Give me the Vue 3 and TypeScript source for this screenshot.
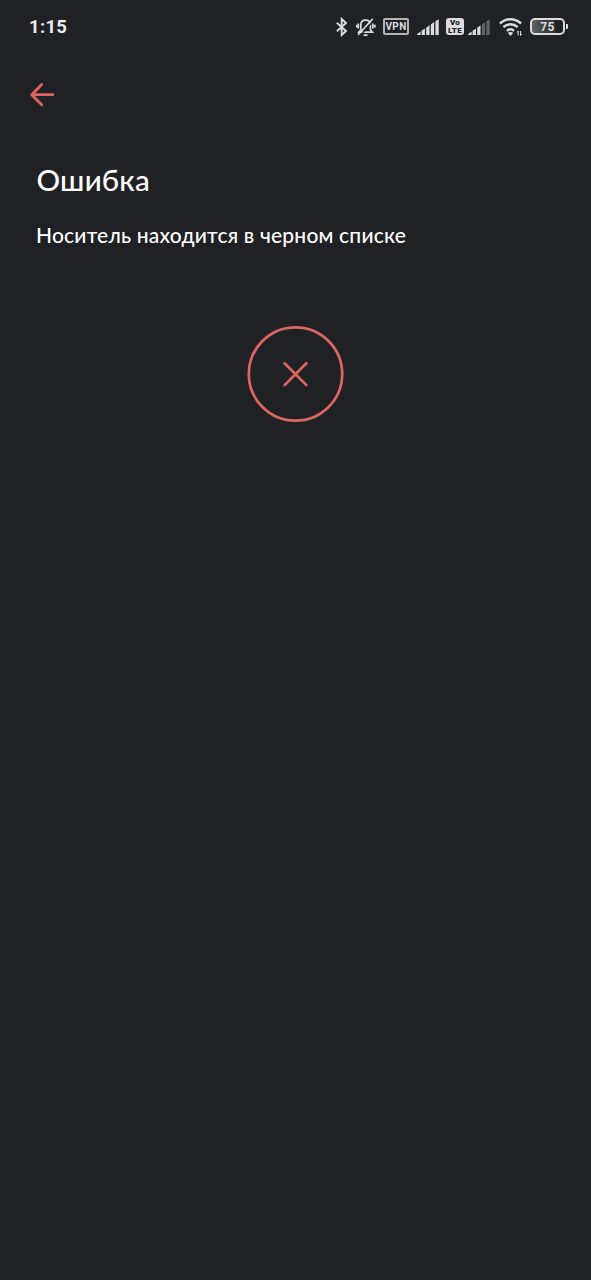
<script setup lang="ts">
const bars: string[] = [
  'M0 15.200 3.600 12.500V16H.8Q0 16 0 15.200z',
  'M4.600 11.800 7.900 9.400V16H4.600z',
  'M9.200 8.700 12.500 6.300V16H9.200z',
  'M13.800 5.500 17.100 3.100V16h-3.300z',
  'M18.400 2.300 21.700.2V16h-3.300z',
]

const time = '1:15'
const title = 'Ошибка'
const message = 'Носитель находится в черном списке'
</script>

<template>
  <main class="screen">
    <header class="status">
      <span class="time">{{ time }}</span>
      <div class="indicators">
        <svg class="bluetooth" width="12" height="20" viewBox="0 0 12 20">
          <path d="M.8 5.800 10 14 5.700 18V2L10 6 .8 14.200" />
        </svg>
        <svg class="bell" width="20" height="20" viewBox="0 0 20 20">
          <path d="M2.800 15.200h13.600l-2-2.500V8.200c0-3-1.900-5-4.800-5S4.800 5.200 4.800 8.200v4.500zM7.600 18.200h4M2.300 6.500v5M.5 7.800v2.600M16.900 6.500v5M18.900 7.800v2.600" />
          <path class="gap" d="M3.900 19 18.100 3" />
          <path d="M2 18 16.800 1.800" />
        </svg>
        <span class="vpn">VPN</span>
        <svg class="signal" width="22" height="16" viewBox="0 0 22 16">
          <path v-for="bar in bars" :key="bar" :d="bar" />
        </svg>
        <span class="volte"><span>Vo</span><span>LTE</span></span>
        <svg class="signal second" width="22" height="16" viewBox="0 0 22 16">
          <path v-for="(bar, index) in bars" :key="bar" :class="{ off: index > 2 }" :d="bar" />
        </svg>
        <svg class="wifi" width="24" height="20" viewBox="0 0 24 20">
          <path d="M.9 6.500C7.300.8 15.700.8 22.100 6.500M4.300 10.200c4.300-3.900 10.100-3.900 14.400 0M7.900 13.800c2.200-2 5-2 7.200 0" />
          <path class="fill" d="M8.800 16c1.600-1.300 3.800-1.300 5.400 0L11.500 18.900z" />
          <path class="data" d="M19.200 18.500v-4.500l-1.300 1.500M21.500 14v4.500l1.300-1.500" />
        </svg>
        <span class="battery">
          <span class="level">75</span>
        </span>
      </div>
    </header>

    <nav class="toolbar">
      <button class="back" type="button" aria-label="Назад">
        <svg width="26" height="26" viewBox="0 0 26 26">
          <path d="M12.700 2.600 2.700 12.700l10 10.100M3 12.700h20.800" />
        </svg>
      </button>
    </nav>

    <section class="content">
      <h1>{{ title }}</h1>
      <p>{{ message }}</p>
      <svg class="failure" width="98" height="98" viewBox="0 0 98 98">
        <circle cx="48.500" cy="49" r="46.700" />
        <path d="m37.600 38.300 21.800 21.800M59.400 38.300 37.600 60.100" />
      </svg>
    </section>
  </main>
</template>

<style>
body {
  margin: 0;
  background: #202124;
}
</style>

<style scoped>
.screen {
  box-sizing: border-box;
  width: 100%;
  height: 1280px;
  background: #202124;
  color: #fff;
  font-family: Lato, "Noto Sans", sans-serif;
}

.status {
  display: flex;
  justify-content: space-between;
  align-items: center;
  box-sizing: border-box;
  height: 54px;
  padding: 0 23px 0 29px;
  color: #dcdcde;
}

.time {
  margin-top: -1px;
  color: #ececee;
  font: 700 18.500px/24px Roboto, sans-serif;
  letter-spacing: 0.300px;
}

.indicators {
  display: flex;
  align-items: center;
  height: 20px;
  margin-top: -1px;
}

svg {
  display: block;
  flex: none;
  fill: none;
  stroke: currentColor;
}

.bluetooth {
  margin-right: 8px;
  stroke-width: 1.900;
}

.bell {
  margin-right: 7px;
  stroke-width: 1.700;
}

.gap {
  stroke: #202124;
  stroke-width: 1.200;
}

.vpn {
  box-sizing: border-box;
  width: 26px;
  height: 17px;
  margin-right: 8px;
  border: 2px solid #b4b4b7;
  border-radius: 2px;
  font: 700 10px/13.500px Roboto, sans-serif;
  letter-spacing: 0.400px;
  text-align: center;
}

.signal {
  margin-right: 7px;
  fill: currentColor;
  stroke: none;
}

.off {
  opacity: 0.350;
}

.volte {
  display: flex;
  flex-direction: column;
  align-items: center;
  justify-content: center;
  width: 18px;
  height: 17px;
  margin-right: 4px;
  border-radius: 3px;
  background: currentColor;
  font: 900 8px/7.500px Roboto, sans-serif;
  letter-spacing: 0.300px;
}

.volte span {
  color: #202124;
}

.second {
  margin-right: 9px;
}

.wifi {
  margin-right: 7px;
  stroke-width: 2.400;
}

.wifi .fill {
  fill: currentColor;
  stroke: none;
}

.wifi .data {
  stroke-width: 1;
}

.battery {
  display: flex;
  align-items: center;
}

.battery::after {
  width: 2px;
  height: 5px;
  margin-left: 1px;
  border-radius: 0 1px 1px 0;
  background: currentColor;
  content: "";
}

.level {
  box-sizing: border-box;
  width: 35px;
  height: 17px;
  border: 2px solid currentColor;
  border-radius: 5px;
  background: linear-gradient(90deg, #606164, #3b3c3f 45%, #303134 75%, transparent 75%) padding-box;
  font: 700 12px/14px Roboto, sans-serif;
  letter-spacing: 0.400px;
  text-align: center;
}

.toolbar {
  display: flex;
  align-items: center;
  height: 81px;
  padding-left: 29px;
}

.back {
  padding: 0;
  border: 0;
  background: none;
  color: #de6662;
}

.back svg {
  stroke-width: 2.800;
  stroke-linecap: round;
  stroke-linejoin: round;
}

.content {
  display: flex;
  flex-direction: column;
  padding: 25px 36px 0;
}

h1 {
  margin: 0;
  padding-left: 0.500px;
  font-size: 29.500px;
  font-weight: 500;
  letter-spacing: 0.200px;
  line-height: 40px;
}

p {
  margin: 20px 0 0;
  font-size: 21px;
  font-weight: 500;
  letter-spacing: 0.190px;
  line-height: 30px;
  white-space: nowrap;
}

.failure {
  align-self: center;
  margin-top: 75px;
  color: #de6662;
  stroke-width: 2.700;
  stroke-linecap: round;
}
</style>
